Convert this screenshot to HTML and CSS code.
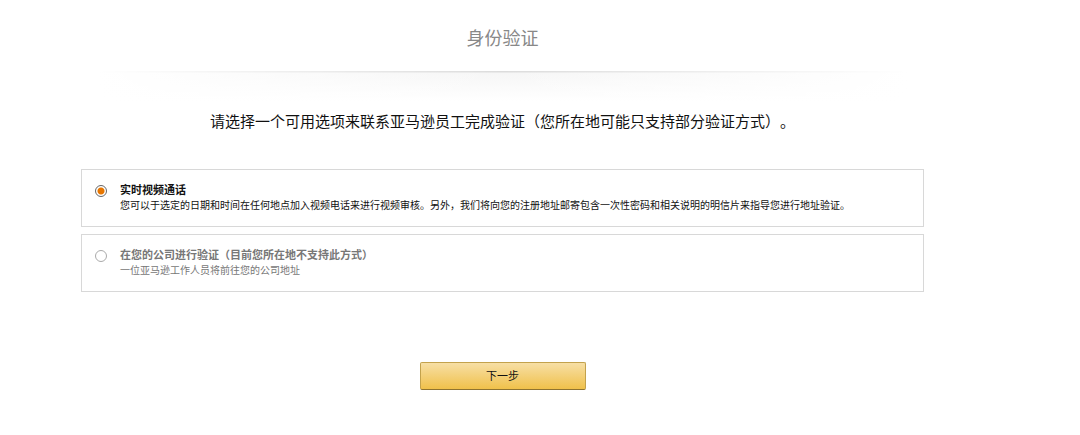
FILE: index.html
```html
<!DOCTYPE html>
<html lang="zh-CN">
<head>
  <meta charset="utf-8">
  <meta name="viewport" content="width=device-width, initial-scale=1">
  <title>身份验证</title>
  <link rel="stylesheet" href="styles.css">
</head>
<body>
  <main class="page">
    <h1 class="page-title">身份验证</h1>
    <div class="divider"></div>
    <form class="verify-form">
      <p class="intro" id="intro">请选择一个可用选项来联系亚马逊员工完成验证（您所在地可能只支持部分验证方式）。</p>
      <div class="options" role="radiogroup" aria-labelledby="intro">
        <label class="option">
          <input class="option-radio" type="radio" name="method" value="video" checked>
          <span class="option-body">
            <span class="option-title">实时视频通话</span>
            <span class="option-text">您可以于选定的日期和时间在任何地点加入视频电话来进行视频审核。另外，我们将向您的注册地址邮寄包含一次性密码和相关说明的明信片来指导您进行地址验证。</span>
          </span>
        </label>
        <label class="option option-disabled">
          <input class="option-radio" type="radio" name="method" value="onsite" disabled>
          <span class="option-body">
            <span class="option-title">在您的公司进行验证（目前您所在地不支持此方式）</span>
            <span class="option-text">一位亚马逊工作人员将前往您的公司地址</span>
          </span>
        </label>
      </div>
      <button class="next-button" type="button">下一步</button>
    </form>
  </main>
</body>
</html>
```
FILE: styles.css
```css
* {
  box-sizing: border-box;
}

body {
  margin: 0;
  background: #fff;
  color: #111;
  font-family: "Noto Sans CJK SC", sans-serif;
  text-spacing-trim: space-all;
}

.page {
  padding: 25px 156px 40px 81px;
}

.page-title {
  margin: 0;
  color: #888;
  font-size: 18px;
  font-weight: 400;
  line-height: 24px;
  text-align: center;
}

.divider {
  height: 30px;
  margin-top: 22px;
  background:
    linear-gradient(to right, #fff 2%, rgba(255, 255, 255, 0) 50%, #fff 98%),
    linear-gradient(to bottom, #dcdcdc 1px, #f6f6f6 2px, #fff);
}

.verify-form {
  display: flex;
  flex-direction: column;
}

.intro {
  margin: 9px 0 37px;
  font-size: 15px;
  line-height: 22px;
  text-align: center;
}

.options {
  display: flex;
  flex-direction: column;
  gap: 7px;
}

.option {
  display: flex;
  gap: 13px;
  padding: 12px 13px 14px;
  border: 1px solid #d8d8d8;
}

.option-radio {
  appearance: none;
  flex: none;
  width: 12px;
  height: 12px;
  margin: 3px 0 0;
  border: 1px solid #666;
  border-radius: 50%;
  background: #fff;
}

.option-radio:checked {
  background: radial-gradient(circle, #e77600 3px, #fff 4px);
}

.option-radio:disabled {
  border-color: #aaa;
}

.option-body {
  display: flex;
  flex-direction: column;
}

.option-title {
  font-size: 11px;
  font-weight: 700;
  line-height: 15px;
}

.option-text {
  font-size: 10px;
  line-height: 15px;
}

.option-disabled {
  color: #777;
}

.next-button {
  align-self: center;
  width: 166px;
  height: 28px;
  margin-top: 70px;
  padding: 0 0 2px;
  border: 1px solid #c3a24c;
  border-bottom-color: #8f7430;
  border-radius: 2px;
  background: linear-gradient(#f7dfa5, #f0c14b);
  color: #111;
  font-family: inherit;
  font-size: 11px;
  line-height: 16px;
}
```
